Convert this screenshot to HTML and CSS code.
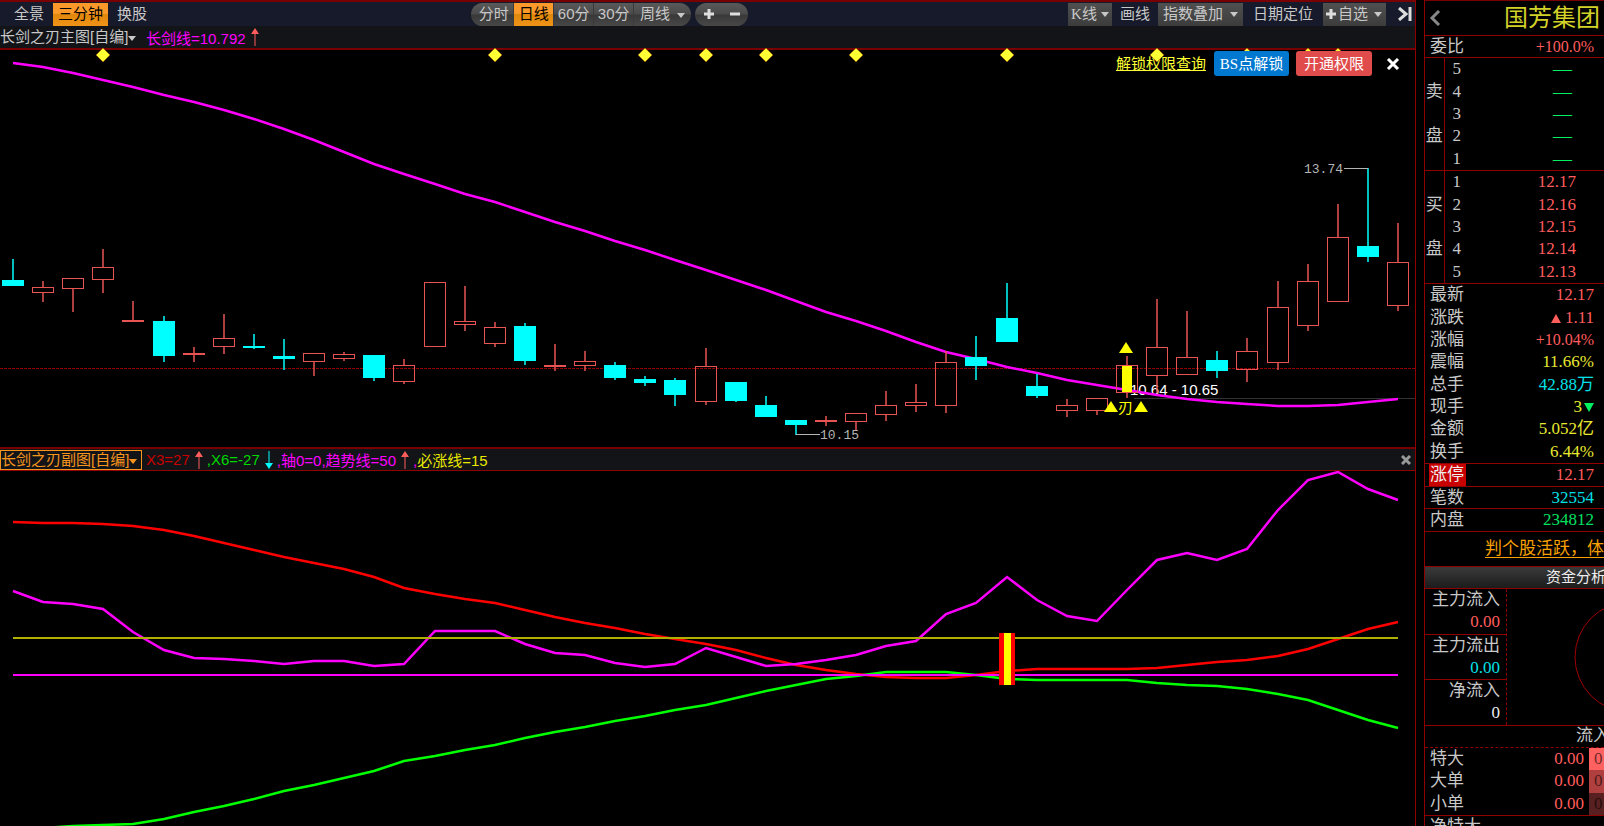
FILE: index.html
```html
<!DOCTYPE html>
<html lang="zh-CN">
<head>
    <meta charset="UTF-8">
    <meta name="viewport" content="width=device-width, initial-scale=1.0">
    <title>国芳集团</title>
    <link rel="stylesheet" href="styles.css">
</head>
<body>
    <main class="charts">
        <!-- Toolbar -->
        <nav class="toolbar">
            <div class="tabs">
                <button class="tab">全景</button>
                <button class="tab active">三分钟</button>
                <button class="tab">换股</button>
            </div>
            <div class="pill">
                <button>分时</button>
                <button class="active">日线</button>
                <button>60分</button>
                <button>30分</button>
                <button class="wide">周线 <i class="caret"></i></button>
            </div>
            <div class="pill zoom">
                <button aria-label="放大"><svg width="10" height="10"><path d="M0 5H10M5 0V10" stroke="#ddd" stroke-width="3"/></svg></button>
                <button aria-label="缩小"><svg width="10" height="10"><path d="M0 5H10" stroke="#ddd" stroke-width="3"/></svg></button>
            </div>
            <div class="tools">
                <button class="tool boxed k-line"><span class="latin">K</span>线<i class="caret"></i></button>
                <button class="tool">画线</button>
                <button class="tool boxed">指数叠加<i class="caret"></i></button>
                <button class="tool">日期定位</button>
                <button class="tool boxed add"><svg width="10" height="10"><path d="M0 5H10M5 0V10" stroke="#ddd" stroke-width="3"/></svg>自选<i class="caret"></i></button>
                <button class="tool last" aria-label="收起"><svg width="14" height="14"><path d="M1 1L8 7L1 13" fill="none" stroke="#ddd" stroke-width="3"/><path d="M12 0V14" stroke="#ddd" stroke-width="3"/></svg></button>
            </div>
        </nav>

        <!-- Main chart -->
        <header class="indicator">
            <button class="indicator-name">长剑之刃主图[自编]<i class="caret"></i></button>
            <span class="magenta">长剑线=10.792</span>
            <svg class="arrow up" width="8" height="18"><path d="M4 3V18" stroke="#ff5c5c" stroke-width="1"/><path d="M4 0L8 6H0Z" fill="#ff5c5c"/></svg>
        </header>
        <section class="panel price">
            <svg id="price-chart"></svg>
            <div class="unlock">
                <a href="#">解锁权限查询</a>
                <button class="blue"><span class="latin">BS</span>点解锁</button>
                <button class="red">开通权限</button>
                <button class="close" aria-label="关闭"><svg width="14" height="12"><path d="M2 1L12 11M12 1L2 11" stroke="#fff" stroke-width="3"/></svg></button>
            </div>
        </section>

        <!-- Sub chart -->
        <header class="indicator sub">
            <button class="indicator-name">长剑之刃副图[自编]<i class="caret"></i></button>
            <span class="dark-red">X3=27</span>
            <svg class="arrow up" width="8" height="18"><path d="M4 3V18" stroke="#ff5c5c" stroke-width="1"/><path d="M4 0L8 6H0Z" fill="#ff5c5c"/></svg>
            <span class="green">,X6=-27</span>
            <svg class="arrow down" width="8" height="18"><path d="M4 0V15" stroke="#00ffff" stroke-width="1"/><path d="M4 18L8 12H0Z" fill="#00ffff"/></svg>
            <span class="magenta">,轴0=0,趋势线=50</span>
            <svg class="arrow up" width="8" height="18"><path d="M4 3V18" stroke="#ff5c5c" stroke-width="1"/><path d="M4 0L8 6H0Z" fill="#ff5c5c"/></svg>
            <span class="yellow"><span class="magenta">,</span>必涨线=15</span>
            <button class="close-sub" aria-label="关闭副图"><svg width="10" height="10"><path d="M1 1L9 9M9 1L1 9" stroke="#999" stroke-width="3"/></svg></button>
        </header>
        <section class="panel trend">
            <svg id="trend-chart"></svg>
        </section>
    </main>

    <!-- Quote panel -->
    <aside class="quote">
        <header class="stock">
            <button aria-label="上一个"><svg width="12" height="16"><path d="M10 1L3 8L10 15" fill="none" stroke="#888" stroke-width="3"/></svg></button>
            <h1>国芳集团</h1>
        </header>
        <div class="line ratio"><span>委比</span><span class="up narrow">+100.0%</span></div>

        <table class="book asks">
            <tr><th></th><td>5</td><td class="dash">—</td></tr>
            <tr><th>卖</th><td>4</td><td class="dash">—</td></tr>
            <tr><th></th><td>3</td><td class="dash">—</td></tr>
            <tr><th>盘</th><td>2</td><td class="dash">—</td></tr>
            <tr><th></th><td>1</td><td class="dash">—</td></tr>
        </table>
        <table class="book bids">
            <tr><th></th><td>1</td><td class="up">12.17</td></tr>
            <tr><th>买</th><td>2</td><td class="up">12.16</td></tr>
            <tr><th></th><td>3</td><td class="up">12.15</td></tr>
            <tr><th>盘</th><td>4</td><td class="up">12.14</td></tr>
            <tr><th></th><td>5</td><td class="up">12.13</td></tr>
        </table>

        <table class="stats">
            <tr><th>最新</th><td class="up">12.17</td></tr>
            <tr><th>涨跌</th><td class="up"><i class="tri-up"></i>1.11</td></tr>
            <tr><th>涨幅</th><td class="up narrow">+10.04%</td></tr>
            <tr><th>震幅</th><td class="yellow">11.66%</td></tr>
            <tr><th>总手</th><td class="cyan">42.88万</td></tr>
            <tr><th>现手</th><td class="yellow">3<i class="tri-down"></i></td></tr>
            <tr><th>金额</th><td class="yellow">5.052亿</td></tr>
            <tr><th>换手</th><td class="yellow">6.44%</td></tr>
        </table>
        <div class="line tall"><span class="limit">涨停</span><span class="up">12.17</span></div>
        <div class="line"><span>笔数</span><span class="cyan">32554</span></div>
        <div class="line tall"><span>内盘</span><span class="down">234812</span></div>
        <div class="promo"><a href="#">判个股活跃，体</a></div>
        <h2>资金分析</h2>

        <section class="flow">
            <dl>
                <div><dt>主力流入</dt><dd class="up">0.00</dd></div>
                <div><dt>主力流出</dt><dd class="cyan">0.00</dd></div>
                <div><dt>净流入</dt><dd>0</dd></div>
            </dl>
            <div class="pie"><svg width="112" height="112"><circle cx="56" cy="56" r="55" fill="none" stroke="#a00000"/></svg></div>
        </section>
        <div class="orders-title">流入</div>
        <table class="orders">
            <tr><th>特大</th><td class="up">0.00</td><td class="big"><span>0</span></td></tr>
            <tr><th>大单</th><td class="up">0.00</td><td class="mid"><span>0</span></td></tr>
            <tr><th>小单</th><td class="up">0.00</td><td class="small"><span>0</span></td></tr>
        </table>
        <div class="line net"><span>净特大</span></div>
    </aside>

    <script src="script.js"></script>
</body>
</html>
```
FILE: styles.css
```css
* {
    box-sizing: border-box;
}

body {
    margin: 0;
    height: 100vh;
    display: flex;
    gap: 8px;
    overflow: hidden;
    background-color: #000;
    color: #c8c8c8;
    font-family: 'Liberation Sans', 'Noto Sans CJK SC', sans-serif;
    font-size: 15px;
}

button {
    margin: 0;
    padding: 0;
    border: none;
    background: none;
    color: inherit;
    font: inherit;
    white-space: nowrap;
    cursor: pointer;
}

svg {
    display: block;
    flex: none;
}

.latin {
    font-family: 'Liberation Serif', serif;
}

.caret {
    display: inline-block;
    border: 4px solid transparent;
    border-top: 5px solid currentColor;
    border-bottom: none;
    vertical-align: middle;
}

.magenta { color: #f0f; }
.dark-red { color: #c80000; }
.green { color: #00d800; }
.yellow { color: #e8e830; }
.cyan { color: #00e0e8; }
.up { color: #ff5c5c; }
.down { color: #00e060; }

/* Charts column */
.charts {
    flex: 1;
    min-width: 0;
    display: flex;
    flex-direction: column;
    border-right: 1px solid #900000;
}

.toolbar {
    display: flex;
    align-items: center;
    height: 26px;
    border-top: 2px solid #780000;
    background-color: #171a2a;
    flex: none;
}

.tabs {
    display: flex;
    width: 33.3%;
    padding-left: 7px;
}

.tab {
    height: 23px;
    padding: 0 5px;
    margin: 0 2px;
    line-height: 22px;
}

.toolbar .active {
    color: #000;
    background: linear-gradient(#fb9a2a 45%, #e0880c 50%, #f09418);
}

.pill {
    display: flex;
    height: 23px;
    margin-right: 4px;
    border-radius: 12px;
    overflow: hidden;
    background: linear-gradient(#5a5a5a, #4a4a4a 48%, #383838 52%, #484848);
}

.pill button {
    width: 40px;
    line-height: 22px;
    border-right: 1px solid #3a3a3a;
}

.pill button:first-child {
    width: 43px;
    padding-left: 3px;
}

.pill .wide {
    width: 57px;
    border: none;
}

.pill .caret {
    margin-left: 3px;
}

.pill.zoom {
    align-items: center;
    justify-content: center;
    gap: 16px;
    width: 53px;
}

.pill.zoom button {
    width: auto;
    padding: 0;
    border: none;
}

.tools {
    display: flex;
    align-items: center;
    margin-left: auto;
    padding-right: 3px;
}

.tool {
    height: 23px;
    padding: 0 8px;
    line-height: 22px;
    display: flex;
    align-items: center;
}

.tool.boxed {
    padding: 0 5px;
    background: linear-gradient(#505050, #3c3c3c);
}

.tool.boxed .caret {
    margin-left: 7px;
}

.tool.k-line {
    padding: 0 3px;
}

.tool.k-line .caret {
    margin-left: 4px;
}

.tool:nth-child(4) {
    padding: 0 10px;
}

.tool.add {
    gap: 2px;
    padding: 0 4px 0 3px;
}

.tool.add .caret {
    margin-left: 4px;
}

.tool.last {
    padding: 0 0 0 12px;
}

/* Indicator bars */
.indicator {
    display: flex;
    align-items: center;
    height: 24px;
    flex: none;
    border-bottom: 2px solid #780000;
    background-color: #121418;
    white-space: pre;
}

.indicator-name {
    width: 142px;
    height: 20px;
    margin-right: 4px;
    line-height: 20px;
    text-align: left;
    flex: none;
}

.arrow {
    margin: 0 4px 0 5px;
}

.indicator.sub {
    border-top: 2px solid #780000;
    border-bottom: 1px solid #900000;
}

.sub .indicator-name {
    color: #f7941d;
    border: 1px solid #f7941d;
    line-height: 17px;
}

.sub .yellow {
    color: #e8e800;
}

.close-sub {
    margin-left: auto;
    padding-right: 4px;
}

/* Chart panels */
.panel {
    position: relative;
    min-height: 0;
}

.panel > svg {
    position: relative;
    z-index: 1;
    width: 100%;
    height: 100%;
    overflow: visible;
    pointer-events: none;
}

.price { flex: 397; }

.trend {
    flex: 355;
    overflow: hidden;
}

.unlock {
    position: absolute;
    top: 1px;
    right: 15px;
    display: flex;
    align-items: center;
}

.unlock a {
    color: #ff3;
    line-height: 20px;
    margin-right: 8px;
}

.unlock button {
    position: relative;
    z-index: 2;
    height: 25px;
    line-height: 23px;
    color: #fff;
}

.unlock .blue {
    width: 75px;
    margin-right: 7px;
    border-radius: 3px;
    background-color: #0078d0;
}

.unlock .red {
    width: 76px;
    margin-right: 14px;
    border-radius: 3px;
    background-color: #e04c4c;
}

/* Labels drawn inside the charts */
.mark {
    font: 13px 'Liberation Mono', monospace;
    fill: #b4b4b4;
}

.range {
    fill: #fff;
}

.blade {
    fill: #ff0;
}

/* Quote panel */
.quote {
    width: 180px;
    flex: none;
    overflow: hidden;
    border-left: 1px solid #900000;
    border-top: 1px solid #780000;
    font-family: 'Liberation Serif', 'Noto Sans CJK SC', serif;
    font-size: 17px;
    line-height: 22px;
    white-space: nowrap;
}

.quote table {
    width: 100%;
    border-collapse: collapse;
    border-bottom: 1px solid #900000;
}

.quote th,
.quote td {
    padding: 0;
    font-weight: normal;
    line-height: 22px;
}

.quote .narrow {
    font-size: 16px;
}

.stock {
    display: flex;
    align-items: center;
    height: 35px;
    padding-left: 4px;
    border-bottom: 1px solid #900000;
}

.stock h1 {
    margin: 0 4px 0 auto;
    color: #d2d228;
    font-size: 24px;
    font-weight: normal;
    line-height: 34px;
}

.line {
    display: flex;
    justify-content: space-between;
    height: 22px;
    padding: 0 10px 0 5px;
    line-height: 22px;
    border-bottom: 1px solid #900000;
}

.line.tall {
    height: 23px;
}

.book {
    height: 113px;
}

.book th {
    width: 19px;
    border-right: 1px solid #900000;
}

.book td {
    padding-left: 8px;
}

.book td:last-child {
    padding-right: 28px;
    text-align: right;
}

.book td.dash {
    padding-right: 32px;
    color: #00f060;
    font-size: 19px;
}

.stats {
    height: 180px;
}

.stats th {
    padding-left: 5px;
    text-align: left;
}

.stats td {
    padding-right: 10px;
    text-align: right;
}

.tri-up,
.tri-down {
    display: inline-block;
    border: 5px solid transparent;
}

.tri-up {
    margin-right: 4px;
    border-top: none;
    border-bottom: 9px solid #ff5c5c;
}

.tri-down {
    margin-left: 2px;
    border-bottom: none;
    border-top: 9px solid #00f060;
}

.limit {
    margin-left: -1px;
    padding: 0 2px 0 1px;
    color: #eee;
    background-color: #c80000;
}

.promo {
    height: 35px;
    padding-left: 60px;
    line-height: 34px;
    border-bottom: 1px solid #900000;
}

.promo a {
    color: #f8a000;
    text-underline-offset: 3px;
}

.quote h2 {
    height: 22px;
    margin: 0;
    padding-left: 121px;
    color: #eee;
    font-size: 15px;
    font-weight: normal;
    line-height: 20px;
    border-bottom: 1px solid #900000;
    background: linear-gradient(#3a3a3a, #1c1c1c);
}

.flow {
    display: flex;
    align-items: center;
    height: 137px;
    border-bottom: 1px solid #900000;
}

.flow dl {
    width: 82px;
    height: 136px;
    margin: 0;
    flex: none;
    text-align: right;
    border-right: 1px dashed #900000;
}

.flow dl div {
    height: 45px;
    padding-right: 6px;
    border-bottom: 1px solid #900000;
}

.flow dl div:first-child {
    height: 46px;
}

.flow dl div:last-child {
    border-bottom: none;
}

.flow dd {
    margin: 0;
}

.flow dd:not([class]) {
    color: #eee;
}

.pie {
    padding-left: 67px;
}

.orders-title {
    height: 22px;
    padding-left: 151px;
    line-height: 20px;
    border-bottom: 1px dashed #900000;
}

.quote .orders {
    height: 68px;
}

.orders th {
    padding-left: 5px;
    text-align: left;
}

.orders td {
    padding-right: 5px;
    text-align: right;
}

.orders td:last-child {
    width: 15px;
    padding: 0 0 0 5px;
    text-align: left;
    color: rgba(0, 0, 0, 0.6);
}

.orders .big { background-color: #ff6060; }
.orders .mid { background-color: #b04040; }
.orders .small { background-color: #582020; }

.net {
    border: none;
}
```
FILE: script.js
```js
// [high, body top, body bottom, low, falling]
const candles = [
    [259, 280, 286, 286, 1], [281, 287, 292, 302], [278, 278, 288, 312], [249, 267, 279, 293],
    [301, 321, 321, 321], [316, 321, 356, 362, 1], [347, 354, 354, 362], [314, 338, 346, 354],
    [334, 346, 348, 349, 1], [339, 356, 359, 370, 1], [353, 353, 361, 376], [352, 354, 358, 361],
    [355, 355, 378, 381, 1], [359, 365, 381, 384], [282, 282, 346, 346], [286, 321, 324, 331],
    [322, 327, 343, 347], [323, 326, 361, 365, 1], [344, 365, 366, 371], [351, 361, 365, 371],
    [362, 365, 378, 380, 1], [376, 379, 383, 386, 1], [378, 380, 395, 406, 1], [348, 366, 401, 405],
    [382, 382, 401, 402, 1], [396, 405, 417, 417, 1], [420, 420, 425, 435, 1], [416, 421, 421, 426],
    [413, 413, 421, 431], [391, 405, 414, 421], [384, 402, 405, 412], [351, 362, 405, 413],
    [336, 357, 366, 380, 1], [283, 318, 342, 342, 1], [374, 386, 396, 398, 1], [399, 405, 410, 417],
    [398, 398, 410, 415], [356, 365, 392, 398], [299, 347, 375, 393], [311, 357, 374, 374],
    [351, 360, 371, 378, 1], [338, 351, 369, 382], [281, 307, 362, 370], [264, 281, 325, 331],
    [204, 237, 301, 301], [168, 246, 257, 262, 1], [223, 262, 305, 311]
];

const swordLine = [
    63, 67, 73, 80, 87, 95, 102, 110, 119, 129, 140, 152, 164, 174, 184, 194, 202, 212, 222, 231,
    241, 250, 260, 270, 280, 290, 301, 312, 321, 331, 342, 352, 359, 367, 373, 380, 385, 390, 395,
    399, 402, 404, 406, 406, 405, 402, 399
];

const x3 = [
    522, 523, 523, 524, 526, 530, 536, 543, 550, 557, 563, 569, 577, 588, 594, 599, 603, 610, 617,
    623, 628, 634, 639, 644, 650, 658, 665, 670, 674, 677, 678, 678, 675, 671, 669, 669, 669, 669,
    668, 665, 662, 660, 656, 649, 639, 629, 622
];

const x6 = [
    828, 828, 826, 825, 824, 819, 812, 806, 799, 791, 785, 778, 771, 761, 756, 750, 745, 738, 732,
    727, 721, 716, 710, 705, 698, 691, 685, 679, 676, 672, 672, 672, 675, 679, 680, 680, 680, 680,
    683, 685, 686, 689, 694, 700, 710, 720, 728
];

const trend = [
    591, 602, 604, 609, 632, 650, 658, 659, 661, 664, 661, 661, 666, 664, 631, 631, 631, 644, 653,
    655, 663, 667, 664, 648, 657, 666, 664, 660, 655, 646, 641, 614, 603, 577, 600, 616, 621, 590,
    560, 553, 560, 549, 510, 480, 472, 489, 500
];

const signals = [3, 16, 21, 23, 25, 28, 33, 38, 41, 43, 44];

const RED = '#e85454';
const CYAN = '#00ffff';

// x follows the panel's width, y is scaled from [top, top + span] to its height
function makeScale(svg, top, span) {
    const box = svg.getBoundingClientRect();
    return {
        width: box.width,
        x: i => Math.round(13 + i * (box.width - 30) / (candles.length - 1)),
        y: v => (v - top) * box.height / span
    };
}

function rect(x, y, w, h, attrs) {
    return `<rect x="${x}" y="${y}" width="${w}" height="${h}" ${attrs}/>`;
}

function polyline(values, s, color) {
    const points = values.map((v, i) => `${s.x(i)},${s.y(v)}`).join(' ');
    return `<polyline points="${points}" fill="none" stroke="${color}" stroke-width="2.5"/>`;
}

function hline(x1, x2, y, color, width, extra = '') {
    return `<line x1="${x1}" x2="${x2}" y1="${y}" y2="${y}" stroke="${color}" stroke-width="${width}" ${extra}/>`;
}

function triangle(x, y) {
    return `<path d="M${x} ${y}l7 11h-14z" fill="#ff0"/>`;
}

function drawPrice() {
    const svg = document.getElementById('price-chart');
    const s = makeScale(svg, 50, 397);
    let out = hline(0, s.width, s.y(368.5), '#900000', 1, 'stroke-dasharray="3 1"');
    out += hline(s.x(37) + 7, s.width, s.y(398.5), '#333', 1);
    out += `<text class="range" x="${s.x(37) + 3}" y="${s.y(395)}">10.64 - 10.65</text>`;

    let bodies = '';
    candles.forEach(([high, top, bottom, low, falling], i) => {
        const x = s.x(i);
        const color = falling ? CYAN : RED;
        const wick = (a, b) => b > a ? `<line x1="${x}" x2="${x}" y1="${s.y(a)}" y2="${s.y(b)}" stroke="${color}" stroke-width="1.5"/>` : '';
        bodies += wick(high, top) + wick(bottom, low);
        if (falling) {
            bodies += rect(x - 11, s.y(top), 22, s.y(bottom) - s.y(top), `fill="${color}"`);
        } else if (top === bottom) {
            bodies += hline(x - 11, x + 11, s.y(top), color, 2);
        } else {
            bodies += rect(x - 10.5, s.y(top + 0.5), 21, s.y(bottom) - s.y(top), `fill="none" stroke="${color}"`);
        }
    });
    out += polyline(swordLine, s, '#f0f') + bodies;
    out += rect(s.x(37) - 5, s.y(366), 10, s.y(392) - s.y(366), 'fill="#ff0"');

    // Signal triangles round the blade mark
    out += triangle(s.x(37) - 1, s.y(342)) + triangle(s.x(37) - 16, s.y(401)) + triangle(s.x(37) + 14, s.y(401));
    out += `<text class="blade" x="${s.x(37) - 9}" y="${s.y(413)}">刃</text>`;

    // Highest and lowest price
    out += hline(s.x(45) - 24, s.x(45), s.y(168.5), '#b4b4b4', 1);
    out += `<text class="mark" text-anchor="end" x="${s.x(45) - 25}" y="${s.y(173)}">13.74</text>`;
    out += hline(s.x(26), s.x(26) + 24, s.y(434.5), '#b4b4b4', 1);
    out += `<text class="mark" x="${s.x(26) + 24}" y="${s.y(439)}">10.15</text>`;

    signals.forEach(i => {
        out += `<path d="M${s.x(i)} ${s.y(55) - 7}l7 7l-7 7l-7 -7z" fill="#ff3" stroke="#a04000" stroke-width="0.5"/>`;
    });
    svg.innerHTML = out;
}

function drawTrend() {
    const svg = document.getElementById('trend-chart');
    const s = makeScale(svg, 471, 355);
    const last = candles.length - 1;
    svg.innerHTML =
        polyline(x3, s, '#f00') +
        polyline(x6, s, '#0f0') +
        polyline(trend, s, '#f0f') +
        hline(s.x(0), s.x(last), s.y(638), '#b0b000', 2) +
        hline(s.x(0), s.x(last), s.y(675), '#f0f', 2) +
        rect(s.x(33) - 8, s.y(633), 16, s.y(685) - s.y(633), 'fill="#f00"') +
        rect(s.x(33) - 3, s.y(633), 7, s.y(685) - s.y(633), 'fill="#ff0"');
}

function draw() {
    drawPrice();
    drawTrend();
}

draw();
window.addEventListener('resize', draw);
```
